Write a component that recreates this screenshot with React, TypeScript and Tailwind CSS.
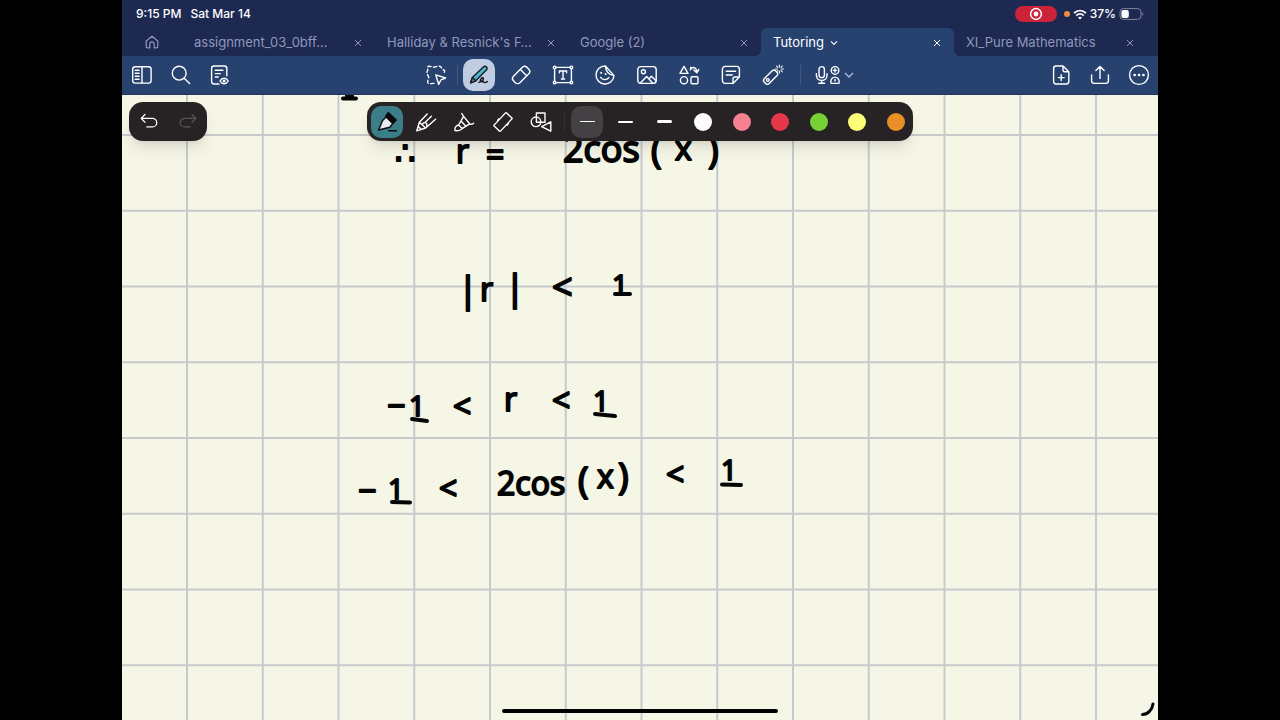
import { ReactNode, useState } from 'react';

interface IconProps {
  children: ReactNode;
  size?: string;
}

// Shared wrapper: every icon is drawn on a 22x22 grid
function Icon({ children, size = 'size-[22px]' }: IconProps) {
  return (
    <svg
      viewBox="0 0 22 22"
      className={`${size} shrink-0`}
      fill="none"
      stroke="currentColor"
      strokeWidth="1.4"
      strokeLinecap="round"
      strokeLinejoin="round"
      aria-hidden="true"
    >
      {children}
    </svg>
  );
}

const tabs = [
  { id: 1, title: 'assignment_03_0bff…' },
  { id: 2, title: "Halliday & Resnick's F…" },
  { id: 3, title: 'Google (2)' },
  { id: 4, title: 'Tutoring' },
  { id: 5, title: 'XI_Pure Mathematics' },
];

const leftActions = [
  {
    label: 'Sidebar',
    icon: (
      <>
        <rect x="1.7" y="2.7" width="18.4" height="16.4" rx="2.6" />
        <path d="M11 2.7v16.4M4.2 6.2h3.9M4.2 9.2h3.9M4.2 12.2h3.9M4.2 15.2h3.9" />
      </>
    ),
  },
  {
    label: 'Search',
    icon: (
      <>
        <circle cx="9.2" cy="9.2" r="6.9" />
        <path d="M14.2 14.2l5.4 5.2" />
      </>
    ),
  },
  {
    label: 'Outline',
    icon: (
      <>
        <path d="M10 20H5a2.4 2.4 0 0 1-2.4-2.4V4.4A2.4 2.4 0 0 1 5 2h10.4a2.4 2.4 0 0 1 2.4 2.4v7.4M6.3 6.2h7.6M6.3 9.6h5M6.3 13h3" />
        <path d="M11 17c2-3.6 6.2-3.6 8.2 0-2 3.6-6.2 3.6-8.2 0z" />
        <circle cx="15.1" cy="17" r=".8" fill="currentColor" />
      </>
    ),
  },
];

const tools = [
  {
    label: 'Eraser',
    icon: (
      <>
        <rect x="1.6" y="6.6" width="19" height="9" rx="3.2" transform="rotate(-45 11 11)" />
        <path d="M10.4 5.4l6.3 6.3" />
      </>
    ),
  },
  {
    label: 'Text',
    icon: (
      <>
        <path d="M4 3.4h14M4 18.6h14M2.6 4.8v12.4M19.4 4.8v12.4M7.4 8.8V7h7.2v1.8M11 7v8M9.4 15h3.2" />
        <circle cx="2.6" cy="3.4" r="1.3" />
        <circle cx="19.4" cy="3.4" r="1.3" />
        <circle cx="2.6" cy="18.6" r="1.3" />
        <circle cx="19.4" cy="18.6" r="1.3" />
      </>
    ),
  },
  {
    label: 'Sticker',
    icon: (
      <>
        <path d="M11.4 2A9 9 0 1 0 20 11.6M11.4 2c.3 5 3.2 8.7 8.6 9.6M11.4 2L20 11.6M6.6 13.4c2 2.8 6 3 8.2.4" />
        <path d="M7.2 8.6v.4M11.6 9.8v.4" strokeWidth="1.8" />
      </>
    ),
  },
  {
    label: 'Image',
    icon: (
      <>
        <rect x="1.8" y="2.6" width="18.4" height="16.8" rx="2.8" />
        <circle cx="7.4" cy="7.8" r="2" />
        <path d="M4.4 19l6.2-6.4 6.2 6.6M13 14.8l2.4-2.6 4.6 4.6" />
      </>
    ),
  },
  {
    label: 'Elements',
    icon: (
      <>
        <path d="M6 2.4l4 7H2zM12.4 5.8c1.600-3.400 6-3 6.400 2.200M15.800 6l3 2.800 2-3.400M12.400 5.800l.4-2.600" />
        <circle cx="6" cy="16.2" r="3.6" />
        <rect x="13" y="12.8" width="7" height="7" rx="1.2" />
      </>
    ),
  },
  {
    label: 'Sticky note',
    icon: (
      <path d="M13 19.4H5.2a2.8 2.8 0 0 1-2.8-2.8V5.2a2.8 2.8 0 0 1 2.8-2.8h11.4a2.8 2.8 0 0 1 2.8 2.8V13L13 19.4V15a2 2 0 0 1 2-2h4.4M6.2 7.2h9.4M6.2 11h6" />
    ),
  },
  {
    label: 'Laser pointer',
    icon: (
      <>
        <rect x=".6" y="9.8" width="16" height="6.8" rx="2.6" transform="rotate(-45 8.6 13.2)" />
        <circle cx="5.8" cy="16" r="1.4" />
        <path d="M17.4 1v2M17.4 7v2M13.4 5h2M19.4 5h2M14.6 2.2l1.2 1.2M19 6.6l1.2 1.2M20.2 2.2L19 3.4M14.8 7.6l1-1" strokeWidth="1.1" />
      </>
    ),
  },
];

const rightActions = [
  {
    label: 'Add page',
    icon: (
      <path d="M13 2H6a2.4 2.4 0 0 0-2.4 2.4v13.2A2.4 2.4 0 0 0 6 20h10.4a2.4 2.4 0 0 0 2.4-2.4V7.8L13 2v4a1.8 1.8 0 0 0 1.8 1.8h4M11.2 10.6v6M8.2 13.6h6" />
    ),
  },
  {
    label: 'Share',
    icon: (
      <path d="M2.6 11v5.8a2.6 2.6 0 0 0 2.6 2.6h11.6a2.6 2.6 0 0 0 2.6-2.6V11M11 14.4V2.6M6.8 6.6L11 2.4l4.2 4.2" />
    ),
  },
  {
    label: 'More',
    icon: (
      <>
        <circle cx="11" cy="11" r="9.4" />
        <path d="M6.6 11h.1M11 11h.1M15.4 11h.1" strokeWidth="2.6" />
      </>
    ),
  },
];

const pens = [
  {
    label: 'Fountain pen',
    icon: (
      <>
        <path d="M2.600 19l4-9.600 4-3.800 6.600 6.200-3.400 4.400z" fill="#e9eaf2" stroke="#0b0b0d" />
        <path d="M9.600 5.400l2.600-3.800 8 7.400-3.400 3.400z" fill="#0b0b0d" stroke="#0b0b0d" />
        <path d="M12.600 19.800h7.800" stroke="#0b0b0d" />
      </>
    ),
  },
  {
    label: 'Ball pen',
    icon: (
      <path d="M1.800 19.800l2.600-8.600L12.200 3M4.400 11.200l6.200 5.800-8.800 2.800M10.600 17L20.600 8.200M7.400 14c.2-1.800 1.400-2.800 3-2.600M10 11.400l6.400-6.200M3.400 15.400l2.800 3M10.400 11.400c1.200.8 1.800 1.800 1.400 3.400" />
    ),
  },
  {
    label: 'Brush pen',
    icon: (
      <path d="M2 19.600c-.6-2.600 1-5.200 3.600-5.600l3.600 3.600c-1.600 1.800-4.600 2.400-7.200 2zM5.600 14l5-8.600 6 7.400-7.400 4.800M10.600 5.400L8.800 2.600M16.600 12.800c1.200.8 2.600.6 4-.6M8 10l4.600 5" />
    ),
  },
  {
    label: 'Highlighter',
    icon: (
      <>
        <rect x="2" y="6.600" width="18" height="8.800" rx=".6" transform="rotate(-47 11 11)" />
        <path d="M7 7.800l-1.400 1.600M16.400 12.600L15 14.200" />
      </>
    ),
  },
  {
    label: 'Shape pen',
    icon: (
      <>
        <circle cx="6" cy="10.800" r="4.800" />
        <path d="M6.400 2h8.600v9.200H6.400zM11.600 15.600l9.200-4.800v9.400z" />
      </>
    ),
  },
];

const swatches = [
  { label: 'White', color: 'bg-[#fdfcfd]' },
  { label: 'Pink', color: 'bg-[#f5808f]' },
  { label: 'Red', color: 'bg-[#e6364a]' },
  { label: 'Green', color: 'bg-[#77d135]' },
  { label: 'Yellow', color: 'bg-[#fdfd78]' },
  { label: 'Orange', color: 'bg-[#ea8e27]' },
];

const widths = [
  { label: 'Thin', bar: 'h-px w-[15px]' },
  { label: 'Medium', bar: 'h-[2px] w-[15px]' },
  { label: 'Thick', bar: 'h-[3px] w-[15px]' },
];

function StatusBar() {
  return (
    <div className="flex h-7 items-center justify-between px-[14px] text-xs font-medium text-white">
      <div className="flex gap-[9px]">
        <span>9:15 PM</span>
        <span>Sat Mar 14</span>
      </div>
      <div className="flex items-center gap-[3px]">
        <span className="mr-1 flex h-4 w-[42px] items-center justify-center rounded-full bg-[#cb2339]">
          <svg viewBox="0 0 14 14" className="size-[14px]" aria-hidden="true">
            <circle cx="7" cy="7" r="5.4" fill="none" stroke="#fff" strokeWidth="1.5" />
            <circle cx="7" cy="7" r="2.4" fill="#fff" />
          </svg>
        </span>
        <span className="size-[6px] rounded-full bg-[#ee8b3c]" />
        <svg viewBox="0 0 14 11" className="h-[11px] w-[14px]" fill="none" stroke="#fff" strokeWidth="1.7" aria-hidden="true">
          <path d="M1 4.2c3.6-3.4 8.4-3.4 12 0M3.2 6.7c2.3-2.1 5.3-2.1 7.6 0" />
          <path d="M5 8.4c1.2-1 2.8-1 4 0l-2 2.1z" fill="#fff" stroke="none" />
        </svg>
        <span>37%</span>
        <svg viewBox="0 0 25 12" className="h-3 w-[25px]" aria-hidden="true">
          <rect x="1" y=".6" width="21" height="10.8" rx="3.4" fill="none" stroke="#7d84a0" />
          <rect x="2.4" y="2" width="7.4" height="8" rx="2" fill="#fff" />
          <path d="M23.4 4.2c1.4.6 1.4 3 0 3.6z" fill="#7d84a0" />
        </svg>
      </div>
    </div>
  );
}

function TabBar({ active, onSelect }: { active: number; onSelect: (id: number) => void }) {
  return (
    <nav className="flex h-7 pr-[11px] text-[13px]">
      <button aria-label="Home" className="flex w-[60px] items-center justify-center text-[#8d98bb]">
        <svg viewBox="0 0 14 14" className="size-[14px]" fill="none" stroke="currentColor" strokeWidth="1.2" strokeLinejoin="round" aria-hidden="true">
          <path d="M1.2 6L7 1.2 12.8 6v5.4a1.4 1.4 0 0 1-1.4 1.4H9.2V9a2.2 2.2 0 0 0-4.4 0v3.8H2.6a1.4 1.4 0 0 1-1.4-1.4z" />
        </svg>
      </button>
      {tabs.map((tab) => {
        const isActive = tab.id === active;
        return (
          <div
            key={tab.id}
            className={`relative flex min-w-0 flex-1 items-center justify-between pl-3 pr-3 pt-px ${
              isActive ? 'rounded-t-md bg-[#27426f] text-white' : 'text-[#8d98bb]'
            }`}
          >
            {isActive && (
              <>
                <span className="absolute -left-[6px] bottom-0 size-[6px] bg-[radial-gradient(circle_at_0_0,#1d2951_6px,#27426f_6px)]" />
                <span className="absolute -right-[6px] bottom-0 size-[6px] bg-[radial-gradient(circle_at_100%_0,#1d2951_6px,#27426f_6px)]" />
              </>
            )}
            <button onClick={() => onSelect(tab.id)} className="flex min-w-0 items-center gap-[6px] whitespace-nowrap">
              {tab.title}
              {isActive && (
                <svg viewBox="0 0 8 6" className="h-[6px] w-2" fill="none" stroke="currentColor" strokeWidth="1.1" aria-hidden="true">
                  <path d="M1 1.4l3 3 3-3" />
                </svg>
              )}
            </button>
            <button aria-label={`Close ${tab.title}`} className="shrink-0">
              <svg viewBox="0 0 10 10" className="size-[10px]" stroke="currentColor" strokeWidth="1" aria-hidden="true">
                <path d="M2 2l6 6M8 2L2 8" />
              </svg>
            </button>
          </div>
        );
      })}
    </nav>
  );
}

function Toolbar() {
  return (
    <div className="grid h-[39px] grid-cols-[1fr_auto_1fr] items-center border-b border-[#1f3863] bg-[#27426f] text-white">
      <div className="flex">
        {leftActions.map((action) => (
          <button key={action.label} aria-label={action.label} className="flex w-[39px] justify-center">
            <Icon>{action.icon}</Icon>
          </button>
        ))}
      </div>

      <div className="flex items-center pr-1">
        <button aria-label="Lasso" className="flex w-[42px] justify-center">
          <Icon>
            <path
              d="M9 19.4c-2-.2-3 .6-4.800.4-2-.4-1.800-2.400-1-4 .8-2 .6-3-.4-4.600C1.400 9.200 2 8 2.600 6.400c.6-1.800-1-3.600 1.200-4.200 2-.2 2.800 1.200 5 1s3.200-1.200 5.600-1 1.800 1.400 2.400 2.600c.6 1.200 2.600.6 2.800 2.400 0 1-.8 1.600-.8 2.800"
              strokeDasharray="3.200 2.600"
            />
            <path d="M10.800 10.800l9.800 3.200-4.600 1.800-2.400 4.600z" />
          </Icon>
        </button>
        <span className="h-5 w-px bg-[#3d5785]" />
        <button aria-label="Pen" className="mx-[5px] flex size-8 items-center justify-center rounded-[10px] bg-[#c0cce2] text-[#1b1c22]">
          <Icon>
            <path d="M2.600 18.800l1.800-5.400L15.600 2.800c1.800-1.600 4.600.8 3.200 2.800L7.800 16.800z" fill="#4db6c9" />
            <path d="M2.600 18.800l1.800-5.400 3.400 3.400z" fill="#6f7f8c" />
            <path d="M10.800 18.400c2.400-.6 5.400-3 4.600-4.400-1-1.200-3.600 1.600-3 3.200.4 1 1.800.6 2.800-.2-.2 1.600 1.600 2.200 4.200.6" />
          </Icon>
        </button>
        {tools.map((tool) => (
          <button key={tool.label} aria-label={tool.label} className="flex w-[42px] justify-center">
            <Icon>{tool.icon}</Icon>
          </button>
        ))}
        <span className="mx-[6px] h-5 w-px bg-[#3d5785]" />
        <button aria-label="Record audio" className="flex w-[54px] items-center justify-center gap-[2px]">
          <svg viewBox="0 0 28 20" className="h-5 w-7" fill="none" stroke="currentColor" strokeWidth="1.4" strokeLinecap="round" aria-hidden="true">
            <rect x="5" y="1.6" width="5.400" height="11" rx="2.700" />
            <path d="M2.400 8.600v1.600c0 7 10.600 7 10.600 0V8.600M7.700 15.400v2.800M4.800 18.200h5.800" />
            <circle cx="21" cy="5.4" r="3.8" />
            <path d="M19.400 5.4h3.200M21 3.800V7M21 14.400v1.600M16.800 17.400c-.4-7 8.800-7 8.400 0 0 .6-.4 1-1 1h-6.400c-.6 0-1-.4-1-1z" />
          </svg>
          <svg viewBox="0 0 10 8" className="h-2 w-[10px] text-[#a9b9da]" fill="none" stroke="currentColor" strokeWidth="1.3" aria-hidden="true">
            <path d="M1 2l4 4 4-4" />
          </svg>
        </button>
      </div>

      <div className="flex justify-end">
        {rightActions.map((action) => (
          <button key={action.label} aria-label={action.label} className="flex w-[39px] justify-center">
            <Icon>{action.icon}</Icon>
          </button>
        ))}
      </div>
    </div>
  );
}

// Squared paper with the written working on top
function Paper() {
  return (
    <svg className="absolute inset-0 size-full" role="img" aria-label="Notebook page">
      <defs>
        <pattern id="grid" patternUnits="userSpaceOnUse" x="64" y="39" width="75.75" height="75.75">
          <path d="M1 0v75.75M0 1h75.75" stroke="#c6cacb" strokeWidth="2" />
        </pattern>
      </defs>
      <rect width="100%" height="100%" fill="url(#grid)" />

      <g transform="translate(-122 -95)">
        <g
          fill="#050505"
          stroke="#050505"
          strokeWidth="2"
          strokeLinejoin="round"
          className="font-['Open_Sans',sans-serif] text-[32px]"
        >
          <text x="395" y="164">∴</text>
          <text x="456" y="163">r</text>
          <text x="486" y="166">=</text>
          <text x="563" y="162" className="text-[36px]">2cos</text>
          <text x="651" y="163" className="text-[36px]">(</text>
          <text x="675" y="160">x</text>
          <text x="708" y="163" className="text-[36px]">)</text>

          <text x="458" y="302" className="text-[36px]">|</text>
          <text x="480" y="301">r</text>
          <text x="505" y="300" className="text-[36px]">|</text>
          <text x="552" y="300" className="text-[36px]">&lt;</text>
          <text x="612" y="295" className="text-[28px]">1</text>

          <text x="387" y="417">−</text>
          <text x="409" y="416" className="text-[28px]">1</text>
          <text x="453" y="418">&lt;</text>
          <text x="504" y="411">r</text>
          <text x="552" y="412">&lt;</text>
          <text x="593" y="411" className="text-[28px]">1</text>

          <text x="358" y="502">−</text>
          <text x="388" y="499" className="text-[28px]">1</text>
          <text x="439" y="500">&lt;</text>
          <text x="497" y="495">2cos</text>
          <text x="578" y="493" className="text-[36px]">(</text>
          <text x="597" y="488">x</text>
          <text x="618" y="489" className="text-[36px]">)</text>
          <text x="666" y="486">&lt;</text>
          <text x="721" y="480" className="text-[28px]">1</text>
        </g>

        {/* underlines and loose pen marks */}
        <g fill="none" stroke="#050505" strokeWidth="4" strokeLinecap="round">
          <path d="M343 98.5h13M347 96h5" />
          <path d="M615 294h15" />
          <path d="M412 419l15 2" />
          <path d="M595 414l20 2" />
          <path d="M392 502l18 .5" />
          <path d="M722 484.5l19 .5" />
          <path d="M1142.5 714.5c5 0 9.500-4 10.500-10.500" strokeWidth="3" />
        </g>
      </g>
    </svg>
  );
}

function PenPalette() {
  const [pen, setPen] = useState('Fountain pen');
  const [width, setWidth] = useState('Thin');

  return (
    <div className="absolute inset-x-0 top-[7px] flex justify-center">
      <div className="flex h-[39px] w-[546px] items-center justify-between rounded-[14px] bg-[#272324] pl-1 pr-px text-white shadow-lg">
        {pens.map((item) => (
          <button
            key={item.label}
            aria-label={item.label}
            onClick={() => setPen(item.label)}
            className={`flex size-8 items-center justify-center rounded-[10px] ${pen === item.label ? 'bg-[#3b7d89]' : ''}`}
          >
            <Icon size="size-[22px]">{item.icon}</Icon>
          </button>
        ))}
        <span className="h-5 w-px bg-[#322e30]" />
        {widths.map((item) => (
          <button
            key={item.label}
            aria-label={item.label}
            onClick={() => setWidth(item.label)}
            className={`flex size-8 items-center justify-center rounded-[10px] ${width === item.label ? 'bg-[#444144]' : ''}`}
          >
            <span className={`rounded-full bg-white ${item.bar}`} />
          </button>
        ))}
        {swatches.map((item) => (
          <button key={item.label} aria-label={item.label} className="flex size-8 items-center justify-center">
            <span className={`size-[18px] rounded-full ${item.color}`} />
          </button>
        ))}
      </div>
    </div>
  );
}

export default function App() {
  const [activeTab, setActiveTab] = useState(4);

  return (
    <div className="min-h-screen bg-black px-[122px] font-[Inter,sans-serif]">
      <div className="flex min-h-screen flex-col bg-[#f5f6e6]">
        <header className="bg-[#1d2951]">
          <StatusBar />
          <TabBar active={activeTab} onSelect={setActiveTab} />
          <Toolbar />
        </header>

        <main className="relative flex-1 overflow-hidden">
          <Paper />

          <div className="absolute left-[7px] top-[7px] flex h-[39px] w-[78px] items-center justify-around rounded-[14px] bg-[#272324] text-white shadow-lg">
            <button aria-label="Undo">
              <Icon size="size-5">
                <path d="M6.6 2.8L2.4 7l4.200 4.200M2.400 7h12.400a4.600 4.600 0 0 1 0 9.400H8.600" />
              </Icon>
            </button>
            <button aria-label="Redo" className="text-[#5a5658]">
              <Icon size="size-5">
                <path d="M15.400 2.800L19.600 7l-4.200 4.200M19.600 7H7.200a4.600 4.600 0 0 0 0 9.400h6.200" />
              </Icon>
            </button>
          </div>

          <PenPalette />

          {/* home indicator */}
          <div className="absolute inset-x-0 bottom-[7px] flex justify-center">
            <span className="h-1 w-[276px] rounded-full bg-black" />
          </div>
        </main>
      </div>
    </div>
  );
}
